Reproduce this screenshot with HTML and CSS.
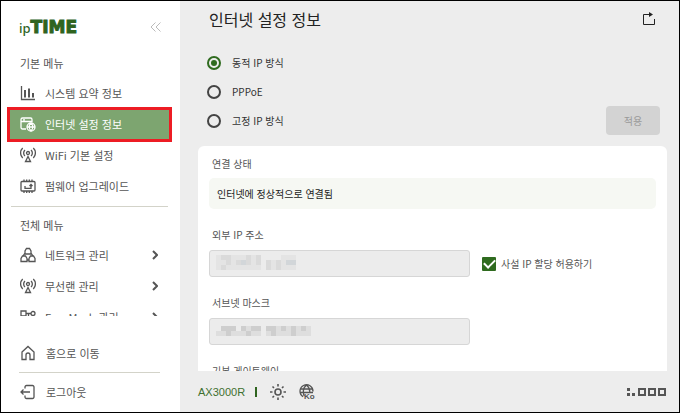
FILE: index.html
```html
<!DOCTYPE html>
<html lang="ko">
<head>
	<meta charset="UTF-8"/>
	<meta name="viewport" content="width=device-width, initial-scale=1.0"/>
	<title>ipTIME</title>
	<link rel="stylesheet" href="styles.css">
</head>
<body>
	<aside class="sidebar">
		<header class="brand">
			<a class="logo" href="#">ip<b>TIME</b></a>
			<button class="icon-button" type="button" aria-label="메뉴 접기">
				<svg class="collapse" viewBox="0 0 12 10"><path d="M5.500 .5L1 5l4.500 4.500M10.500 .5L6 5l4.500 4.500"/></svg>
			</button>
		</header>

		<nav class="menu">
			<h2>기본 메뉴</h2>
			<a class="item" href="#">
				<svg class="icon" viewBox="0 0 16 16"><path d="M1.500 1v13.500H15"/><path class="thick" d="M5 5v7.500M9 3.500v9M13 8v4.500"/></svg>
				<span>시스템 요약 정보</span>
			</a>
			<a class="item active" href="#">
				<svg class="icon" viewBox="0 0 16 16"><path d="M6 13H2.500A1.500 1.500 0 0 1 1 11.500v-8A1.500 1.500 0 0 1 2.500 2h8A1.500 1.500 0 0 1 12 3.500V6M1 5.500h11M3 3.800h2"/><circle cx="11" cy="11" r="4"/><path d="M7 11h8M11 7c-2.300 2.300-2.300 5.700 0 8M11 7c2.300 2.300 2.300 5.700 0 8"/></svg>
				<span>인터넷 설정 정보</span>
			</a>
			<a class="item" href="#">
				<svg class="icon" viewBox="0 0 16 16"><use href="#antenna"/></svg>
				<span>WiFi 기본 설정</span>
			</a>
			<a class="item" href="#">
				<svg class="icon" viewBox="0 0 16 16"><rect x="1" y="3.500" width="14" height="9.500" rx="1"/><path d="M4 3.500v-2M6.700 3.500v-2M9.300 3.500v-2M12 3.500v-2M4 15v-2M6.700 15v-2M9.300 15v-2M12 15v-2M5 8v2.300h6V7M9.500 8L11 6.500 12.500 8"/></svg>
				<span>펌웨어 업그레이드</span>
			</a>
			<hr>
			<h2>전체 메뉴</h2>
			<a class="item" href="#">
				<svg class="icon" viewBox="0 0 16 16"><path d="M6.500 1.500h3L11 4v3H5V4zM2.500 9h3L7 11.500v3H1v-3zM10.500 9h3l1.500 2.500v3H9v-3zM5 6L3 9M11 6l2 3M7 13h2"/></svg>
				<span>네트워크 관리</span>
				<svg class="chevron" viewBox="0 0 6 10"><path d="M1 1l4 4-4 4"/></svg>
			</a>
			<a class="item" href="#">
				<svg class="icon" viewBox="0 0 16 16"><use href="#antenna"/></svg>
				<span>무선랜 관리</span>
				<svg class="chevron" viewBox="0 0 6 10"><path d="M1 1l4 4-4 4"/></svg>
			</a>
			<a class="item" href="#">
				<svg class="icon" viewBox="0 0 16 16"><path d="M1 2h5v5H1zM6 4.500h5M8.500 4.500V13H11M11 11h4v4h-4z"/><circle cx="13" cy="4.500" r="2"/></svg>
				<span>EasyMesh 관리</span>
				<svg class="chevron" viewBox="0 0 6 10"><path d="M1 1l4 4-4 4"/></svg>
			</a>
		</nav>

		<div class="shortcuts">
			<a class="item" href="#">
				<svg class="icon" viewBox="0 0 16 16"><path d="M2 7l6-5.500L14 7v7.500h-4V10a2 2 0 0 0-4 0v4.500H2z"/></svg>
				<span>홈으로 이동</span>
			</a>
			<hr>
			<a class="item" href="#">
				<svg class="icon" viewBox="0 0 16 16"><path d="M5 4.500V3a1.500 1.500 0 0 1 1.500-1.500h6A1.500 1.500 0 0 1 14 3v10a1.500 1.500 0 0 1-1.500 1.500h-6A1.500 1.500 0 0 1 5 13v-1.500M10 8H1M3.500 5.500L1 8l2.500 2.500"/></svg>
				<span>로그아웃</span>
			</a>
		</div>
	</aside>

	<main class="main">
		<header class="title">
			<h1>인터넷 설정 정보</h1>
			<button class="icon-button" type="button" aria-label="새로고침">
				<svg class="refresh" viewBox="0 0 14 14"><path d="M12.500 7v5.500h-11v-10H9"/><path class="head" d="M7 0l4 2.500L7 5z"/></svg>
			</button>
		</header>

		<form class="content">
			<div class="mode">
				<div class="radios">
					<label><input type="radio" name="mode" checked>동적 IP 방식</label>
					<label><input type="radio" name="mode">PPPoE</label>
					<label><input type="radio" name="mode">고정 IP 방식</label>
				</div>
				<button class="apply" type="button" disabled>적용</button>
			</div>

			<section class="card">
				<h3>연결 상태</h3>
				<p class="status">인터넷에 정상적으로 연결됨</p>

				<label class="name" for="ip">외부 IP 주소</label>
				<div class="row">
					<div class="field">
						<input id="ip" type="text" disabled>
						<!-- hidden address -->
						<svg class="mask" viewBox="0 0 80 15">
							<path fill="#e4e4e4" d="M0 0h45v15H0zM50 5h30v10H50zM65 0h15v5H65z"/>
							<path fill="#dadada" d="M5 0h10v5H5zM30 0h5v5h-5zM40 0h5v10h-5zM10 5h5v5h-5zM20 5h15v5H20zM50 5h5v10h-5zM60 5h5v5h-5zM75 5h5v5h-5zM5 10h5v5H5zM60 10h5v5h-5z"/>
							<path fill="#d2d6d9" d="M70 5h10v5H70zM25 5h5v5h-5z"/>
						</svg>
					</div>
					<label class="check"><input type="checkbox" checked>사설 IP 할당 허용하기</label>
				</div>

				<label class="name" for="subnet">서브넷 마스크</label>
				<div class="row">
					<div class="field">
						<input id="subnet" type="text" disabled>
						<svg class="mask wide" viewBox="0 0 95 10">
							<path fill="#dedede" d="M0 5h5V0h15v5h5V0h20v10H0zM50 0h45v10H50z"/>
							<path fill="#cecece" d="M5 0h15v5H5zM25 0h5v5h-5zM35 0h10v5H35zM50 0h10v5H50zM65 0h5v5h-5zM75 0h5v5h-5zM85 0h5v5h-5zM10 5h5v5h-5zM30 5h5v5h-5zM55 5h5v5h-5zM75 5h5v5h-5z"/>
						</svg>
					</div>
				</div>

				<label class="name" for="gateway">기본 게이트웨이</label>
				<div class="row">
					<div class="field"><input id="gateway" type="text" disabled></div>
				</div>
			</section>
		</form>

		<footer class="bar">
			<span class="model">AX3000R</span>
			<button class="icon-button" type="button" aria-label="테마">
				<svg class="icon sun" viewBox="0 0 16 16"><circle cx="8" cy="8" r="3"/><path d="M8 0v2.500M8 13.500V16M0 8h2.500M13.500 8H16M2.500 2.500l1.500 1.500M12 12l1.500 1.500M13.500 2.500L12 4M4 12l-1.500 1.500"/></svg>
			</button>
			<button class="icon-button" type="button" aria-label="언어">
				<svg class="icon" viewBox="0 0 16 16"><path d="M4 12.700A6.500 6.500 0 1 1 14 7.500M1.500 5h12M1 8.500h13M7.500 1C4.500 3.500 4 6 4.500 8.500c0 1.500.2 2.500.8 3.500M7.500 1c3 2.500 3.500 5 3.200 7.500"/><text x="5" y="15">Ko</text></svg>
			</button>
			<svg class="steps" viewBox="0 0 40 8"><path class="dots" d="M0 0h3v3H0zM0 5h3v3H0zM5 5h3v3H5z"/><path d="M12 1h6v6h-6zM22 1h6v6h-6zM32 1h6v6h-6z"/></svg>
		</footer>
	</main>

	<svg class="defs">
		<g id="antenna"><circle cx="8" cy="6" r="1.500"/><path d="M8 9.500l-2.500 5h5zM5 9a4 4 0 0 1 0-6M11 9a4 4 0 0 0 0-6M2.700 11a7 7 0 0 1 0-10M13.300 11a7 7 0 0 0 0-10"/></g>
	</svg>
</body>
</html>
```
FILE: styles.css
```css
*{
	box-sizing: border-box;
	margin: 0;
	padding: 0;
}
body{
	display: flex;
	height: 100vh;
	border: 1px solid #000;
	background: #ededed;
	color: #555;
	font-family: "Noto Sans CJK KR", sans-serif;
	font-size: 11px;
	line-height: 20px;
	overflow: hidden;
}
a{
	color: inherit;
	text-decoration: none;
}
svg{
	display: block;
	flex: none;
	fill: none;
	stroke: currentColor;
}
hr{
	border: 0;
	border-top: 1px solid #d3d3c9;
}
.defs{
	position: absolute;
	width: 0;
	height: 0;
}
.icon-button{
	border: 0;
	background: none;
	color: inherit;
}

/* sidebar */
.sidebar{
	display: flex;
	flex-direction: column;
	flex: none;
	width: 179px;
	background: #fff;
}
.brand{
	display: flex;
	flex: none;
	justify-content: space-between;
	align-items: center;
	height: 52px;
	padding: 0 18px;
}
.logo{
	color: #2f641f;
	font-family: "Noto Sans", sans-serif;
	font-size: 13px;
	font-weight: 500;
}
.logo b{
	font-family: "DejaVu Sans", sans-serif;
	font-size: 17px;
	-webkit-text-stroke: 1px #2f641f;
}
.collapse{
	width: 12px;
	height: 10px;
	color: #bbb;
}
.menu{
	flex: 1;
	overflow: hidden;
	padding: 0 10px 0 8px;
}
.menu h2{
	margin: 0 0 5px 11px;
	font-size: 11px;
	font-weight: normal;
}
.menu hr{
	margin: 4px 2px 8px;
}
.item{
	display: flex;
	align-items: center;
	gap: 9px;
	height: 31px;
	padding: 0 12px 1px 11px;
}
.item.active{
	background: #7da570;
	color: #fff;
	outline: 3px solid #ed1c24;
	outline-offset: -1px;
}
.icon{
	width: 16px;
	height: 16px;
	stroke-width: 1.3;
}
.icon .thick{
	stroke-width: 2;
}
.icon.sun{
	stroke-width: 1.6;
}
.icon text{
	fill: currentColor;
	stroke: none;
	font: bold 8px "Liberation Sans", sans-serif;
}
.chevron{
	width: 6px;
	height: 10px;
	margin-left: auto;
	stroke-width: 2;
}
.shortcuts{
	flex: none;
	padding: 22px 8px 4px;
}
.shortcuts .item{
	gap: 10px;
}
.shortcuts hr{
	margin: 3px 12px 4px 10px;
}

/* main */
.main{
	display: flex;
	flex-direction: column;
	flex: 1;
	min-width: 0;
	padding: 0 12px 0 18px;
}
.title{
	display: flex;
	flex: none;
	justify-content: space-between;
	align-items: center;
	height: 36px;
	padding: 0 11px;
	color: #222;
}
.title h1{
	font-size: 16px;
	font-weight: normal;
}
.refresh{
	width: 14px;
	height: 14px;
}
.refresh .head{
	fill: currentColor;
	stroke: none;
}
.content{
	flex: 1;
	min-height: 0;
	overflow: hidden;
	font-size: 10px;
}
.mode{
	display: flex;
	justify-content: space-between;
	align-items: flex-end;
	padding: 11px 7px 11px 9px;
	color: #333;
}
.radios label{
	display: flex;
	align-items: center;
	gap: 11px;
	height: 29px;
}
.radios input{
	appearance: none;
	width: 14px;
	height: 14px;
	border: 2px solid #444;
	border-radius: 50%;
}
.radios input:checked{
	border-color: #2f6b1f;
	background: #2f6b1f;
	background-clip: content-box;
	padding: 2px;
}
.apply{
	width: 54px;
	height: 29px;
	border: 0;
	border-radius: 4px;
	background: #d3d3d3;
	color: #999;
	font: inherit;
}
.card{
	padding: 8px 11px;
	border-radius: 6px;
	background: #fff;
}
.card h3, .name{
	display: block;
	padding-left: 3px;
	font-size: 10px;
	font-weight: normal;
}
.status{
	height: 31px;
	margin: 4px 0 16px;
	padding: 0 8px;
	border-radius: 5px;
	background: #f6f8f3;
	color: #222;
	line-height: 31px;
}
.row{
	display: flex;
	align-items: center;
	gap: 12px;
	margin: 5px 0 16px;
}
.field{
	position: relative;
	flex: 0 1 261px;
}
.field input{
	display: block;
	width: 100%;
	height: 27px;
	border: 1px solid #d6d6d6;
	border-radius: 3px;
	background: #ececec;
}
.mask{
	position: absolute;
	top: 5px;
	left: 7px;
	width: 80px;
	height: 15px;
	stroke: none;
}
.mask.wide{
	top: 8px;
	width: 95px;
	height: 10px;
}
.check{
	display: flex;
	align-items: center;
	gap: 5px;
}
.check input{
	display: grid;
	place-items: center;
	appearance: none;
	width: 14px;
	height: 14px;
	border-radius: 1px;
	background: #2f6b1f;
}
.check input::before{
	content: "";
	width: 9px;
	height: 5px;
	margin-bottom: 3px;
	border: solid #fff;
	border-width: 0 0 2px 2px;
	transform: rotate(-45deg);
}
.bar{
	display: flex;
	flex: none;
	align-items: center;
	gap: 13px;
	height: 41px;
}
.model{
	display: flex;
	align-items: center;
	gap: 10px;
	color: #3f7030;
	font-family: "Liberation Sans", sans-serif;
}
.model::after{
	content: "";
	height: 10px;
	border-left: 2px solid #2f641f;
}
.steps{
	width: 40px;
	height: 8px;
	margin-left: auto;
	stroke-width: 2;
}
.steps .dots{
	fill: currentColor;
	stroke: none;
}
```
